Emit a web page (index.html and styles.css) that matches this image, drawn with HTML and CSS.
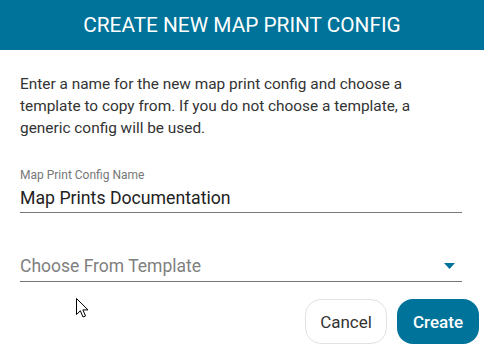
FILE: index.html
```html
<!DOCTYPE html>
<html>
<head>
<meta charset="utf-8">
<link rel="stylesheet" href="styles.css">
</head>
<body>
<div class="dialog">
  <header class="title">CREATE NEW MAP PRINT CONFIG</header>
  <div class="content">
    <p class="intro">Enter a name for the new map print config and choose a template to copy from. If you do not choose a template, a generic config will be used.</p>
    <div class="field name">
      <label class="label">Map Print Config Name</label>
      <div class="value">Map Prints Documentation</div>
    </div>
    <div class="field select">
      <div class="placeholder">Choose From Template</div>
      <svg class="caret" width="11" height="6" viewBox="0 0 11 6"><path d="M0 0H11L5.5 6Z" fill="#00739a"/></svg>
    </div>
  </div>
  <div class="actions">
    <button class="btn cancel">Cancel</button>
    <button class="btn create">Create</button>
  </div>
  <svg class="cursor" width="14" height="22" viewBox="0 0 14 22"><path d="M1.5 1.5V17.5L5.3 13.8L8 20L10.5 19L7.9 12.9H13Z" fill="#fff" stroke="#000" stroke-width="1" stroke-linejoin="miter"/></svg>
</div>
</body>
</html>
```

FILE: styles.css
```css
html, body {
  margin: 0;
  padding: 0;
  background: #fff;
}
.dialog {
  position: relative;
  width: 484px;
  height: 350px;
  font-family: Roboto, "Liberation Sans", sans-serif;
  overflow: hidden;
}
.title {
  height: 50px;
  line-height: 50px;
  background: #00739a;
  color: #fff;
  text-align: center;
  font-size: 20.8px;
}
.content {
  padding: 0 22px 0 20px;
}
.intro {
  margin: 0;
  padding-top: 23px;
  font-size: 15.4px;
  line-height: 22px;
  color: #333;
}
.field {
  border-bottom: 1px solid #777;
}
.name {
  margin-top: 29px;
  display: flex;
  flex-direction: column;
}
.label {
  font-size: 12px;
  line-height: 14px;
  color: #777;
}
.value {
  font-size: 17.7px;
  line-height: 20px;
  color: #222;
  padding: 6px 0 4px;
}
.select {
  margin-top: 41px;
  display: flex;
  align-items: center;
  justify-content: space-between;
  padding: 0 0 3px;
}
.placeholder {
  font-size: 17.5px;
  line-height: 24px;
  color: #808080;
}
.caret {
  margin-right: 7px;
}
.actions {
  display: flex;
  justify-content: flex-end;
  gap: 10px;
  padding: 17px 5px 0 0;
}
.btn {
  height: 45px;
  border-radius: 16px;
  font-family: Roboto, "Liberation Sans", sans-serif;
  font-size: 17px;
  padding: 0;
  cursor: pointer;
}
.cancel {
  width: 82px;
  background: #fff;
  border: 1px solid #e2e2e2;
  color: #333;
}
.create {
  width: 82px;
  background: #00739a;
  border: none;
  color: #fff;
  font-weight: 500;
}
.cursor {
  position: absolute;
  left: 75px;
  top: 297px;
}
```
